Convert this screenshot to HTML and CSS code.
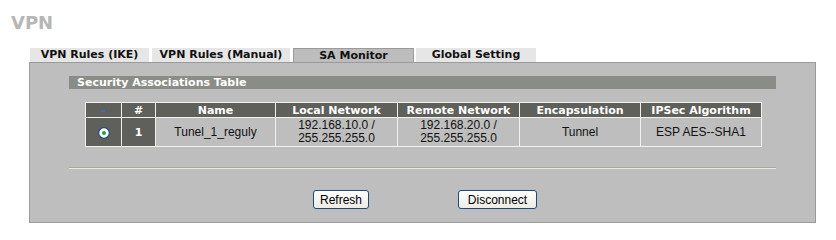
FILE: index.html
```html
<!DOCTYPE html>
<html lang="en">
<head>
    <meta charset="UTF-8">
    <title>VPN</title>
    <link rel="stylesheet" href="styles.css">
</head>
<body>
    <div class="page">
        <h1 class="title">VPN</h1>
        <div class="tabs">
            <div class="tab tab-ike">VPN Rules (IKE)</div>
            <div class="tab tab-manual">VPN Rules (Manual)</div>
            <div class="tab tab-sa active">SA Monitor</div>
            <div class="tab tab-global">Global Setting</div>
        </div>
        <div class="panel">
            <div class="section-bar">Security Associations Table</div>
            <table class="sa-table">
                <thead>
                    <tr>
                        <th class="c-sel"><span class="dash">-</span></th>
                        <th class="c-num">#</th>
                        <th class="c-name">Name</th>
                        <th class="c-net">Local Network</th>
                        <th class="c-net">Remote Network</th>
                        <th class="c-enc">Encapsulation</th>
                        <th class="c-alg">IPSec Algorithm</th>
                    </tr>
                </thead>
                <tbody>
                    <tr>
                        <td class="dark">
                            <svg class="radio" width="12" height="12" viewBox="0 0 12 12">
                                <circle cx="6" cy="6" r="5.3" fill="#ffffff" stroke="#1e4f7e" stroke-width="1.2"/>
                                <circle cx="6" cy="6" r="2" fill="#22a32a"/>
                            </svg>
                        </td>
                        <td class="dark num">1</td>
                        <td>Tunel_1_reguly</td>
                        <td>192.168.10.0 /<br>255.255.255.0</td>
                        <td>192.168.20.0 /<br>255.255.255.0</td>
                        <td>Tunnel</td>
                        <td>ESP AES--SHA1</td>
                    </tr>
                </tbody>
            </table>
            <div class="separator"></div>
            <div class="actions">
                <button class="btn btn-refresh">Refresh</button>
                <button class="btn btn-disconnect">Disconnect</button>
            </div>
        </div>
    </div>
</body>
</html>
```

FILE: styles.css
```css
body{
    margin: 0;
    background-color: #ffffff;
    font-family: "DejaVu Sans", Verdana, sans-serif;
}
.page{
    padding: 12px 0 0 11px;
}
.title{
    margin: 0;
    font-size: 18px;
    line-height: 22px;
    color: #b6b6b6;
}
.tabs{
    display: flex;
    gap: 3px;
    margin: 14px 0 0 19px;
    height: 14px;
}
.tab{
    background-color: #e6e6e6;
    font-size: 11px;
    font-weight: bold;
    line-height: 14px;
    text-align: center;
    color: #111;
    box-sizing: border-box;
}
.tab-ike{ width: 119px; }
.tab-manual{ width: 138px; }
.tab-sa{ width: 121px; }
.tab-global{ width: 120px; margin-left: -1px; }
.tab.active{
    background-color: #bdbdbd;
    border: 1px solid #9a9a9a;
    border-bottom: none;
    line-height: 13px;
}
.panel{
    margin-left: 18px;
    background-color: #bebebe;
    border: 1px solid #9a9a9a;
    padding: 13px 0 13px 39px;
    width: 746px;
}
.section-bar{
    width: 699px;
    height: 13px;
    padding-left: 8px;
    background-color: #8a8c88;
    color: #ffffff;
    font-size: 11px;
    font-weight: bold;
    line-height: 13px;
}
.sa-table{
    margin: 13px 0 0 16px;
    width: 674px;
    border-collapse: collapse;
    table-layout: fixed;
    border: 1px solid #f2f1ea;
}
.sa-table th, .sa-table td{
    border: 1px solid #f2f1ea;
    padding: 0;
    text-align: center;
}
.sa-table th{
    background-color: #5f605c;
    color: #ffffff;
    font-size: 11px;
    font-weight: bold;
    height: 14px;
    line-height: 13px;
}
.sa-table td{
    font-family: "Liberation Sans", Arial, sans-serif;
    font-size: 12px;
    line-height: 13px;
    height: 28px;
    color: #111;
}
.c-sel{ width: 35px; }
.c-num{ width: 33px; }
.c-name{ width: 119px; }
.c-net{ width: 121px; }
.c-enc{ width: 120px; }
.c-alg{ width: 120px; }
.dash{
    color: #3f66e0;
}
.sa-table td.dark{
    background-color: #5f605c;
    color: #ffffff;
}
.sa-table td.num{
    font-family: "DejaVu Sans", Verdana, sans-serif;
    font-size: 11px;
    font-weight: bold;
}
.radio{
    display: block;
    margin: 1px auto 0;
}
.separator{
    width: 707px;
    height: 1px;
    margin-top: 20px;
    background-color: #a9a79f;
    border-bottom: 1px solid #ecebdf;
}
.actions{
    display: flex;
    justify-content: center;
    gap: 89px;
    margin-top: 21px;
    padding-right: 34px;
}
.btn{
    height: 19px;
    padding: 0;
    font-family: "Liberation Sans", Arial, sans-serif;
    font-size: 12px;
    color: #000;
    background: linear-gradient(#ffffff, #ecebe4);
    border: 1px solid #1d4b7c;
    border-radius: 3px;
}
.btn-refresh{ width: 56px; }
.btn-disconnect{ width: 79px; }
```
